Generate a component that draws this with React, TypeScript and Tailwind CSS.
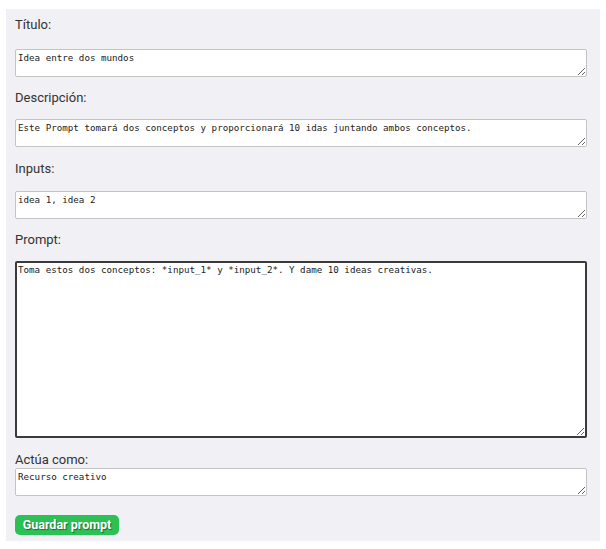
import React, { useState } from "react";

const fieldClass =
  "block w-[572px] h-[28px] px-[2px] py-[2px] bg-white border border-[#c4c4c4] rounded-[2px] text-[9.2px] leading-[12px] text-[#222] font-['DejaVu_Sans_Mono',monospace] outline-none";

export default function App() {
  const [title, setTitle] = useState("Idea entre dos mundos");
  const [description, setDescription] = useState(
    "Este Prompt tomará dos conceptos y proporcionará 10 idas juntando ambos conceptos."
  );
  const [inputs, setInputs] = useState("idea 1, idea 2");
  const [prompt, setPrompt] = useState(
    "Toma estos dos conceptos: *input_1* y *input_2*. Y dame 10 ideas creativas."
  );
  const [role, setRole] = useState("Recurso creativo");

  return (
    <div className="bg-white pt-[9px] pl-[6px] w-[606px] h-[549px] font-['Roboto',sans-serif]">
      <form
        className="w-[594px] h-[532px] bg-[#f0f0f5] px-[9px] pt-[6px]"
        onSubmit={(e) => e.preventDefault()}
      >
        <label className="block text-[13px] leading-[20px] text-[#333] mb-[14px]">
          Título:
        </label>
        <textarea
          className={fieldClass}
          spellCheck={false}
          value={title}
          onChange={(e) => setTitle(e.target.value)}
        />

        <label className="block text-[13px] leading-[20px] text-[#333] mt-[11px] mb-[11px]">
          Descripción:
        </label>
        <textarea
          className={fieldClass}
          spellCheck={false}
          value={description}
          onChange={(e) => setDescription(e.target.value)}
        />

        <label className="block text-[13px] leading-[20px] text-[#333] mt-[12px] mb-[12px]">
          Inputs:
        </label>
        <textarea
          className={fieldClass}
          spellCheck={false}
          value={inputs}
          onChange={(e) => setInputs(e.target.value)}
        />

        <label className="block text-[13px] leading-[20px] text-[#333] mt-[11px] mb-[11px]">
          Prompt:
        </label>
        <textarea
          className="block w-[572px] h-[177px] px-[1px] py-[1px] bg-white border-2 border-[#3a3a3a] rounded-[2px] text-[9.2px] leading-[12px] text-[#222] font-['DejaVu_Sans_Mono',monospace] outline-none"
          spellCheck={false}
          value={prompt}
          onChange={(e) => setPrompt(e.target.value)}
        />

        <label className="block text-[13px] leading-[16px] text-[#333] mt-[14px]">
          Actúa como:
        </label>
        <textarea
          className={fieldClass}
          spellCheck={false}
          value={role}
          onChange={(e) => setRole(e.target.value)}
        />

        <button
          type="submit"
          className="mt-[19px] h-[20px] w-[104px] rounded-[5px] bg-[#2cc155] text-white text-[12.5px] font-bold leading-[20px] [text-shadow:1px_1px_1px_rgba(0,0,0,0.45)] cursor-pointer"
        >
          Guardar prompt
        </button>
      </form>
    </div>
  );
}
